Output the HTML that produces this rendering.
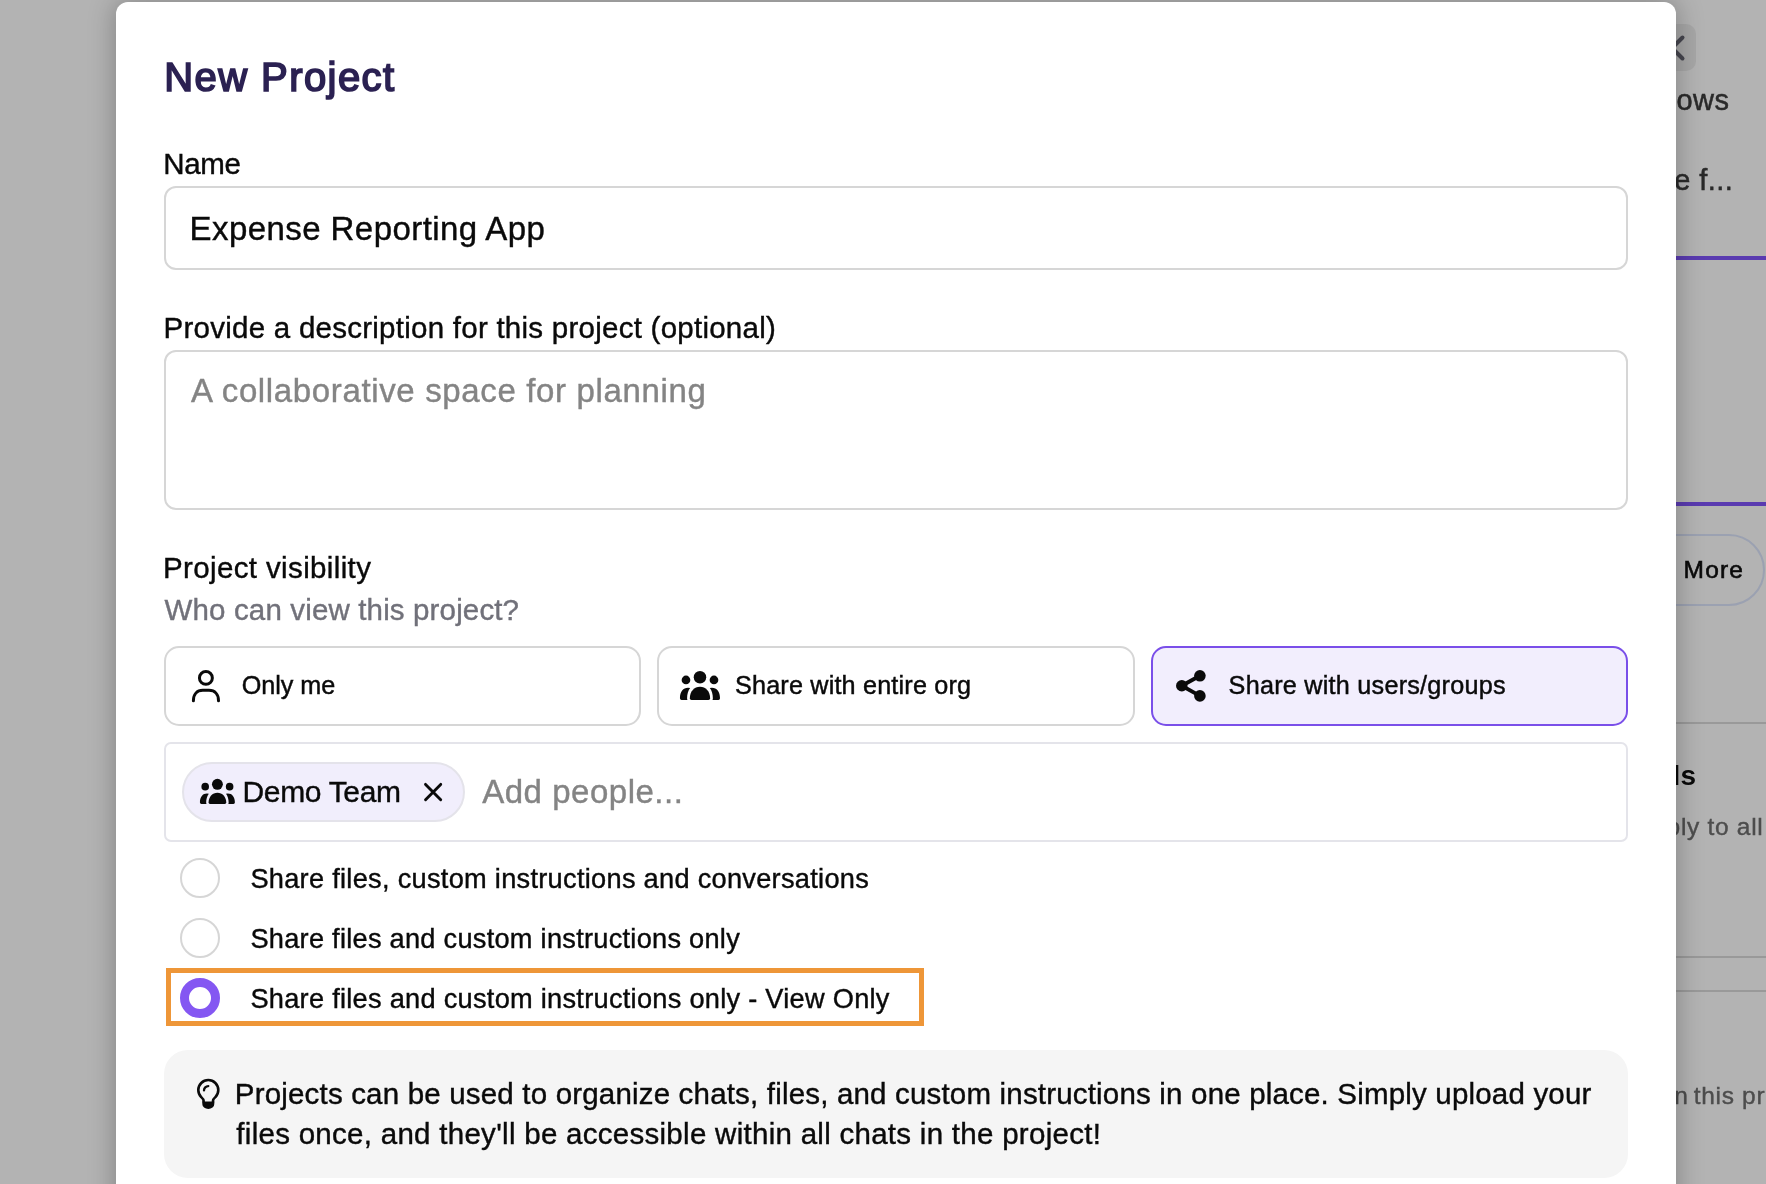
<!DOCTYPE html>
<html lang="en">
<head>
<meta charset="utf-8">
<title>New Project</title>
<style>
html,body{margin:0;padding:0;width:1766px;height:1184px;overflow:hidden}
body{width:1766px;height:1184px;overflow:hidden;position:relative;background:#b3b3b3;font-family:"Liberation Sans",sans-serif}
.t{position:absolute;white-space:nowrap;line-height:1}
.abs{position:absolute;box-sizing:border-box}
#page{position:absolute;left:0;top:0;width:1766px;height:1184px;overflow:hidden;will-change:transform}
#modal{position:absolute;left:116px;top:2px;width:1560px;height:1300px;background:#fff;border-radius:12px;box-shadow:0 0 26px 2px rgba(0,0,0,.25)}
#clip{position:absolute;left:0;top:0;width:1766px;height:1184px;overflow:hidden}
#fg{position:absolute;left:0;top:0;width:1766px;height:1184px;overflow:hidden;will-change:transform}
.inp{border:2px solid #d6d6d6;border-radius:12px;background:#fff}
.btn{border:2px solid #d6d6d6;border-radius:15px;background:#fff}
.btn.sel{border-color:#7a4fe9;background:#f2eefd}
.radio{width:40px;height:40px;border-radius:50%;border:2px solid #d6d6d6;background:#fff}
.radio.on{border:9px solid #8457f2}
svg{position:absolute;overflow:visible}
</style>
</head>
<body>
<div id="page">
  <!-- dimmed background page -->
  <div class="abs" style="left:1648px;top:24px;width:48px;height:47px;border-radius:10px;background:#a7a7a7"></div>
  <svg style="left:1660px;top:36px" width="24" height="24" viewBox="0 0 24 24"><path d="M1.5 1.5 L22.5 22.5 M22.5 1.5 L1.5 22.5" stroke="#46464f" stroke-width="4" stroke-linecap="round" fill="none"/></svg>
  <div class="abs" style="left:1600px;top:256px;width:166px;height:4px;background:#5a3bb0"></div>
  <div class="abs" style="left:1600px;top:502px;width:166px;height:4px;background:#5a3bb0"></div>
  <div class="abs" style="left:1560px;top:534px;width:205px;height:72px;border:2px solid #9ba1b1;border-radius:36px"></div>
  <div class="abs" style="left:1600px;top:722px;width:166px;height:2px;background:#999"></div>
  <div class="abs" style="left:1600px;top:956px;width:166px;height:2px;background:#999"></div>
  <div class="abs" style="left:1600px;top:990px;width:166px;height:2px;background:#999"></div>
<span class="t" id="t_bg1" style="top:86.35px;font-size:29px;color:#2a2a2a;letter-spacing:0.500px;-webkit-text-stroke:0.5px;right:36.50px;">Workflows</span>
<span class="t" id="t_bg2" style="top:166.35px;font-size:29px;color:#2a2a2a;letter-spacing:0.400px;-webkit-text-stroke:0.5px;right:32.90px;">Create f...</span>
<span class="t" id="t_bg3" style="top:558.06px;font-size:24.5px;color:#0a0a0a;letter-spacing:1.200px;-webkit-text-stroke:0.6px;left:1683.55px;">More</span>
<span class="t" id="t_bg4" style="top:761.70px;font-size:28px;font-weight:700;color:#0a0a0a;letter-spacing:0.300px;right:69.65px;">Models</span>
<span class="t" id="t_bg5" style="top:815.46px;font-size:24.5px;color:#4d4d4d;letter-spacing:0.700px;-webkit-text-stroke:0.4px;right:2.55px;">Apply to all</span>
<span class="t" id="t_bg6" style="top:1084.06px;font-size:24.5px;color:#4d4d4d;letter-spacing:0.700px;-webkit-text-stroke:0.4px;left:1693.70px;">this project</span>
<span class="t" id="t_bg7" style="top:1084.06px;font-size:24.5px;color:#4d4d4d;letter-spacing:0.700px;-webkit-text-stroke:0.4px;right:77.35px;">in</span>
</div>
<div id="clip"><div id="modal"></div></div>
<div id="fg">
  <div class="abs inp" style="left:164px;top:186px;width:1464px;height:84px"></div>
  <div class="abs inp" style="left:164px;top:350px;width:1464px;height:160px"></div>

  <div class="abs btn" style="left:164px;top:646px;width:477px;height:80px"></div>
  <div class="abs btn" style="left:657px;top:646px;width:478px;height:80px"></div>
  <div class="abs btn sel" style="left:1151px;top:646px;width:477px;height:80px"></div>

  <!-- user icon -->
  <svg style="left:181px;top:661px" width="50" height="50" viewBox="181 661 50 50"><circle cx="205.9" cy="677.9" r="6.45" fill="none" stroke="#0a0a0a" stroke-width="3"/><path d="M193.4 700.7 C193.4 694.4 196.9 690.35 202.8 690.35 H209 C214.9 690.35 218.5 694.4 218.5 700.7" fill="none" stroke="#0a0a0a" stroke-width="3" stroke-linecap="round"/></svg>
  <!-- users icon (org) -->
  <svg style="left:672px;top:662px" width="56" height="46" viewBox="0 0 56 46"><g id="ug" fill="#0a0a0a"><circle cx="27.98" cy="15.27" r="6.25"/><circle cx="13.99" cy="17.96" r="4.35"/><circle cx="41.97" cy="17.96" r="4.35"/><path d="M19.5 37.9 Q17.85 37.9 17.85 36.2 C17.85 29.6 22.3 24.85 27.98 24.85 C33.66 24.85 38.11 29.6 38.11 36.2 Q38.11 37.9 36.46 37.9 Z"/><path d="M9.6 37.9 Q7.95 37.9 7.95 36.2 C7.95 29.6 11.2 25.75 16 25.75 Q17.2 25.75 18.15 26.05 C16.2 28.6 15.1 32.3 15.1 36.2 Q15.1 37.2 15.5 37.9 Z"/><path d="M46.36 37.9 Q48.01 37.9 48.01 36.2 C48.01 29.6 44.76 25.75 39.96 25.75 Q38.76 25.75 37.81 26.05 C39.76 28.6 40.86 32.3 40.86 36.2 Q40.86 37.2 40.46 37.9 Z"/></g></svg>
  <!-- share icon -->
  <svg style="left:1166px;top:660px" width="50" height="50" viewBox="1166 660 50 50"><g fill="#0a0a0a"><path d="M1199.9 675.8 L1181.8 685.8 L1199.9 695.9" fill="none" stroke="#0a0a0a" stroke-width="3.9" stroke-linejoin="round"/><circle cx="1199.9" cy="675.8" r="5.8"/><circle cx="1181.8" cy="685.8" r="5.75"/><circle cx="1199.9" cy="695.9" r="5.8"/></g></svg>

  <!-- people box -->
  <div class="abs" style="left:164px;top:742px;width:1464px;height:100px;border:2px solid #e4e4ea;border-radius:7px;background:#fff"></div>
  <div class="abs" style="left:182px;top:762px;width:283px;height:60px;border:2px solid #e4e3ea;border-radius:30px;background:#f1eefc"></div>
  <svg style="left:193.1px;top:770.95px" width="48.86" height="40.14" viewBox="0 0 56 46"><use href="#ug"/></svg>
  <svg style="left:410px;top:770px" width="60" height="46" viewBox="410 770 60 46"><path d="M425.55 784.4 L440.7 799.7 M440.7 784.4 L425.55 799.7" stroke="#0a0a0a" stroke-width="2.9" stroke-linecap="round" fill="none"/></svg>

  <!-- radios -->
  <div class="abs radio" style="left:180px;top:858px"></div>
  <div class="abs radio" style="left:180px;top:918px"></div>
  <div class="abs" style="left:166px;top:968px;width:758px;height:58px;border:5px solid #ee9638"></div>
  <div class="abs radio on" style="left:180px;top:978px"></div>

  <!-- tip -->
  <div class="abs" style="left:164px;top:1050px;width:1464px;height:128px;border-radius:24px;background:#f5f5f5"></div>
  <svg style="left:188px;top:1072px" width="40" height="44" viewBox="0 0 40 44"><path d="M15.6 30.4 V28.8 C15.6 27.3 14.6 26.4 13.2 25.1 A10 10 0 1 1 27.4 25.1 C26 26.4 25 27.3 25 28.8 V30.400" fill="none" stroke="#0a0a0a" stroke-width="2.6"/><path d="M14.3 29.5 H26.3 V32 A6 4.900 0 0 1 14.3 32 Z" fill="#0a0a0a"/><path d="M16 18.400 A4.300 4.300 0 0 1 20.3 14.1" fill="none" stroke="#0a0a0a" stroke-width="2.3" stroke-linecap="round"/></svg>
<span class="t" id="t_title" style="top:56.94px;font-size:40px;color:#2b2152;letter-spacing:1.440px;-webkit-text-stroke:1.7px;left:164.15px;">New Project</span>
<span class="t" id="t_name" style="top:149.23px;font-size:29.5px;color:#0a0a0a;letter-spacing:-0.300px;-webkit-text-stroke:0.4px;left:163.20px;">Name</span>
<span class="t" id="t_nameval" style="top:212.07px;font-size:33px;color:#0a0a0a;letter-spacing:0.428px;-webkit-text-stroke:0.4px;left:189.60px;">Expense Reporting App</span>
<span class="t" id="t_desc" style="top:313.03px;font-size:29.5px;color:#0a0a0a;letter-spacing:0.253px;-webkit-text-stroke:0.4px;left:163.55px;">Provide a description for this project (optional)</span>
<span class="t" id="t_ph" style="top:374.27px;font-size:33px;color:#848484;letter-spacing:0.641px;-webkit-text-stroke:0.4px;left:191.10px;">A collaborative space for planning</span>
<span class="t" id="t_vis" style="top:552.63px;font-size:29.5px;color:#0a0a0a;letter-spacing:0.371px;-webkit-text-stroke:0.4px;left:163.00px;">Project visibility</span>
<span class="t" id="t_who" style="top:594.73px;font-size:29.5px;color:#71717a;letter-spacing:0.144px;-webkit-text-stroke:0.4px;left:164.55px;">Who can view this project?</span>
<span class="t" id="t_b1" style="top:672.67px;font-size:25.2px;color:#0a0a0a;letter-spacing:-0.075px;-webkit-text-stroke:0.45px;left:241.85px;">Only me</span>
<span class="t" id="t_b2" style="top:673.47px;font-size:25.2px;color:#0a0a0a;letter-spacing:0.180px;-webkit-text-stroke:0.45px;left:735.00px;">Share with entire org</span>
<span class="t" id="t_b3" style="top:673.47px;font-size:25.2px;color:#0a0a0a;letter-spacing:0.245px;-webkit-text-stroke:0.45px;left:1228.60px;">Share with users/groups</span>
<span class="t" id="t_chip" style="top:776.61px;font-size:30px;color:#0a0a0a;letter-spacing:-0.338px;-webkit-text-stroke:0.4px;left:242.55px;">Demo Team</span>
<span class="t" id="t_add" style="top:775.27px;font-size:33px;color:#848484;letter-spacing:0.525px;-webkit-text-stroke:0.4px;left:482.15px;">Add people...</span>
<span class="t" id="t_r1" style="top:864.98px;font-size:27.2px;color:#0a0a0a;letter-spacing:0.285px;-webkit-text-stroke:0.4px;left:250.40px;">Share files, custom instructions and conversations</span>
<span class="t" id="t_r2" style="top:924.98px;font-size:27.2px;color:#0a0a0a;letter-spacing:0.265px;-webkit-text-stroke:0.4px;left:250.40px;">Share files and custom instructions only</span>
<span class="t" id="t_r3" style="top:984.98px;font-size:27.2px;color:#0a0a0a;letter-spacing:0.274px;-webkit-text-stroke:0.4px;left:250.40px;">Share files and custom instructions only - View Only</span>
<span class="t" id="t_tip1" style="top:1079.23px;font-size:29.5px;color:#0a0a0a;letter-spacing:0.181px;-webkit-text-stroke:0.4px;left:234.80px;">Projects can be used to organize chats, files, and custom instructions in one place. Simply upload your</span>
<span class="t" id="t_tip2" style="top:1119.03px;font-size:29.5px;color:#0a0a0a;letter-spacing:0.280px;-webkit-text-stroke:0.4px;left:236.35px;">files once, and they'll be accessible within all chats in the project!</span>
</div>
</body>
</html>
